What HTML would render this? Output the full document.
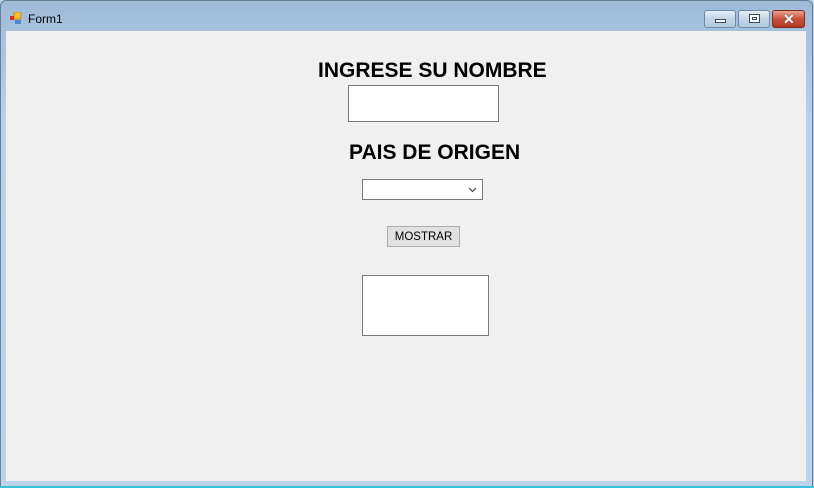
<!DOCTYPE html>
<html><head><meta charset="utf-8"><style>
*{margin:0;padding:0;box-sizing:border-box}
body{width:814px;height:488px;overflow:hidden;background:#b9d1ea;font-family:"Liberation Sans",sans-serif;position:relative}
.frame{position:absolute;left:0;top:0;width:813px;height:487px;background:linear-gradient(#9fbbd9 0,#b9d1ea 120px,#bcd3ec 100%);border:1px solid #6a7f96;border-radius:6px 6px 0 0}
.client{position:absolute;left:6px;top:31px;width:800px;height:450px;background:#f0f0f0}
.bottom{position:absolute;left:0;top:486px;width:814px;height:2px;background:#3cc0d8}
.title{position:absolute;left:28px;top:12px;font-size:12px;color:#000}
.tb{position:absolute;top:10px;height:18px;border:1px solid #6f8aa8;border-radius:3px;background:linear-gradient(#e6eef7,#c3d4e7 50%,#b3c8df)}
.close{background:linear-gradient(#e8a394,#c9513b 50%,#b33a25);border-color:#7a2a1f}
.lbl{position:absolute;font-weight:bold;font-size:21px;color:#000;white-space:nowrap}
.box{position:absolute;background:#fff;border:1px solid #7a7a7a}
</style></head><body>
<div class="frame"></div>
<svg style="position:absolute;left:9px;top:12px" width="14" height="13" viewBox="0 0 14 13">
<rect x="5" y="0" width="7" height="7" fill="#f2c230" stroke="#c08a10"/>
<rect x="1" y="4" width="4" height="4" fill="#d0302a"/>
<rect x="6" y="8" width="6" height="4" fill="#4a86d8"/>
</svg>
<div class="title">Form1</div>
<div class="tb" style="left:704px;width:32px"><div style="position:absolute;left:10px;top:8px;width:11px;height:4px;background:#fff;border:1px solid #3b4a5c"></div></div>
<div class="tb" style="left:738px;width:32px"><div style="position:absolute;left:10px;top:3px;width:11px;height:9px;border:1px solid #3b4a5c;background:#fff"><div style="margin:2px;width:5px;height:3px;border:1px solid #3b4a5c"></div></div></div>
<div class="tb close" style="left:772px;width:33px"><div style="position:absolute;left:10px;top:0;font-weight:bold;color:#fff;font-size:14px;text-shadow:0 0 1px #333">✕</div></div>
<div class="client"></div>
<div class="bottom"></div>
<div class="lbl" style="left:318px;top:59px">INGRESE SU NOMBRE</div>
<div class="box" style="left:348px;top:85px;width:151px;height:37px"></div>
<div class="lbl" style="left:349px;top:141px">PAIS DE ORIGEN</div>
<div class="box" style="left:362px;top:179px;width:121px;height:21px"><svg style="position:absolute;right:5px;top:7px" width="9" height="6"><path d="M1 1 L4.5 4.5 L8 1" fill="none" stroke="#444" stroke-width="1.2"/></svg></div>
<div style="position:absolute;left:387px;top:226px;width:73px;height:21px;background:#e1e1e1;border:1px solid #adadad;font-size:11.5px;text-align:center;line-height:21px;color:#000">MOSTRAR</div>
<div class="box" style="left:362px;top:275px;width:127px;height:61px"></div>
</body></html>
